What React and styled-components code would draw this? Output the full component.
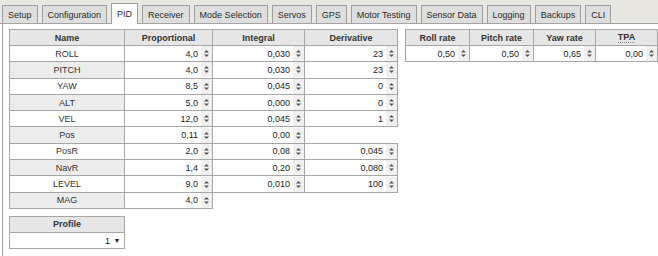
import React from "react"
import styled, { createGlobalStyle } from "styled-components"

const GlobalStyle = createGlobalStyle`
  html, body {
    margin: 0;
    padding: 0;
    background: #fff;
  }
  body {
    font-family: "Liberation Sans", Arial, sans-serif;
    font-size: 9px;
    color: #333;
  }
`

const Page = styled.div`
  width: 658px;
  height: 256px;
  display: flex;
  flex-direction: column;
  overflow: hidden;
  background: #fff;
`

const TabBar = styled.div`
  height: 24px;
  box-sizing: border-box;
  display: flex;
  align-items: flex-end;
  gap: 4px;
  padding-left: 2px;
  background: #e8e7e2;
  border-bottom: 1px solid #a3a3a3;
`

const Tab = styled.div`
  box-sizing: border-box;
  height: ${props => (props.$active ? "21px" : "18px")};
  margin-bottom: ${props => (props.$active ? "-1px" : "0")};
  padding: 0 5px;
  display: flex;
  align-items: center;
  padding-top: ${props => (props.$active ? "0" : "1px")};
  background: ${props => (props.$active ? "#fff" : "#dedede")};
  border: 1px solid #9d9d9d;
  border-bottom: none;
  color: #2a2a2a;
  white-space: nowrap;
  position: relative;
`

const Panel = styled.div`
  flex: 1;
  margin-left: 2px;
  border-left: 1px solid #a3a3a3;
  padding: 5px 0 0 6px;
  display: flex;
  align-items: flex-start;
  gap: 7px;
`

const Column = styled.div`
  display: flex;
  flex-direction: column;
  align-items: flex-start;
  gap: 7px;
`

const Grid = styled.table`
  border-collapse: collapse;
  table-layout: fixed;
`

const Th = styled.th`
  height: 15px;
  padding: 0;
  background: #e6e6e6;
  border: 1px solid #a6a6a6;
  font-weight: bold;
  font-size: 9px;
  color: #333;
  text-align: center;
`

const Tr = styled.tr`
  height: 16.3px;
`

const Td = styled.td`
  padding: 0;
  border: 1px solid #a6a6a6;
  background: #fff;
`

const NameCell = styled(Td)`
  text-align: center;
  color: #333;
  background: ${props => (props.$shade ? "#ececec" : "#fff")};
`

const Field = styled.div`
  display: flex;
  justify-content: flex-end;
  align-items: center;
  height: 15px;
  color: #222;
`

const Value = styled.span`
  padding-right: 3px;
`

const Spin = styled.span`
  width: 11px;
  height: 15px;
  display: flex;
  align-items: center;
  justify-content: center;
  background: #f0f0f0;
`

const Abbr = styled.span`
  border-bottom: 1px dotted #888;
  line-height: 9px;
  display: inline-block;
`

const Arrow = styled.span`
  width: 14px;
  display: flex;
  justify-content: center;
  font-size: 7px;
  color: #222;
`

const Spinner = () => (
  <Spin>
    <svg width="5" height="9" viewBox="0 0 5 9">
      <polygon points="0,3.5 2.5,1 5,3.5" fill="#555" />
      <polygon points="0,5.5 2.5,8 5,5.5" fill="#555" />
    </svg>
  </Spin>
)

const Input = ({ value }) => (
  <Td>
    <Field>
      <Value>{value}</Value>
      <Spinner />
    </Field>
  </Td>
)

const tabs = [
  "Setup",
  "Configuration",
  "PID",
  "Receiver",
  "Mode Selection",
  "Servos",
  "GPS",
  "Motor Testing",
  "Sensor Data",
  "Logging",
  "Backups",
  "CLI",
]

const pids = [
  ["ROLL", "4,0", "0,030", "23"],
  ["PITCH", "4,0", "0,030", "23"],
  ["YAW", "8,5", "0,045", "0"],
  ["ALT", "5,0", "0,000", "0"],
  ["VEL", "12,0", "0,045", "1"],
  ["Pos", "0,11", "0,00"],
  ["PosR", "2,0", "0,08", "0,045"],
  ["NavR", "1,4", "0,20", "0,080"],
  ["LEVEL", "9,0", "0,010", "100"],
  ["MAG", "4,0"],
]

const rates = ["0,50", "0,50", "0,65", "0,00"]

export default function App() {
  return (
    <>
      <GlobalStyle />
      <Page>
        <TabBar>
          {tabs.map(t => (
            <Tab key={t} $active={t === "PID"}>
              {t}
            </Tab>
          ))}
        </TabBar>
        <Panel>
          <Column>
            <Grid>
              <colgroup>
                <col style={{ width: 115 }} />
                <col style={{ width: 88 }} />
                <col style={{ width: 92 }} />
                <col style={{ width: 93 }} />
              </colgroup>
              <thead>
                <tr>
                  <Th>Name</Th>
                  <Th>Proportional</Th>
                  <Th>Integral</Th>
                  <Th>Derivative</Th>
                </tr>
              </thead>
              <tbody>
                {pids.map(([name, ...vals], i) => (
                  <Tr key={name}>
                    <NameCell $shade={i % 2 === 1}>{name}</NameCell>
                    {vals.map((v, j) => (
                      <Input key={j} value={v} />
                    ))}
                  </Tr>
                ))}
              </tbody>
            </Grid>
            <Grid>
              <colgroup>
                <col style={{ width: 115 }} />
              </colgroup>
              <thead>
                <tr>
                  <Th>Profile</Th>
                </tr>
              </thead>
              <tbody>
                <Tr>
                  <Td>
                    <Field>
                      <span>1</span>
                      <Arrow>▼</Arrow>
                    </Field>
                  </Td>
                </Tr>
              </tbody>
            </Grid>
          </Column>
          <Grid>
            <colgroup>
              <col style={{ width: 64 }} />
              <col style={{ width: 64 }} />
              <col style={{ width: 62 }} />
              <col style={{ width: 62 }} />
            </colgroup>
            <thead>
              <tr>
                <Th>Roll rate</Th>
                <Th>Pitch rate</Th>
                <Th>Yaw rate</Th>
                <Th>
                  <Abbr>TPA</Abbr>
                </Th>
              </tr>
            </thead>
            <tbody>
              <Tr>
                {rates.map((v, i) => (
                  <Input key={i} value={v} />
                ))}
              </Tr>
            </tbody>
          </Grid>
        </Panel>
      </Page>
    </>
  )
}
